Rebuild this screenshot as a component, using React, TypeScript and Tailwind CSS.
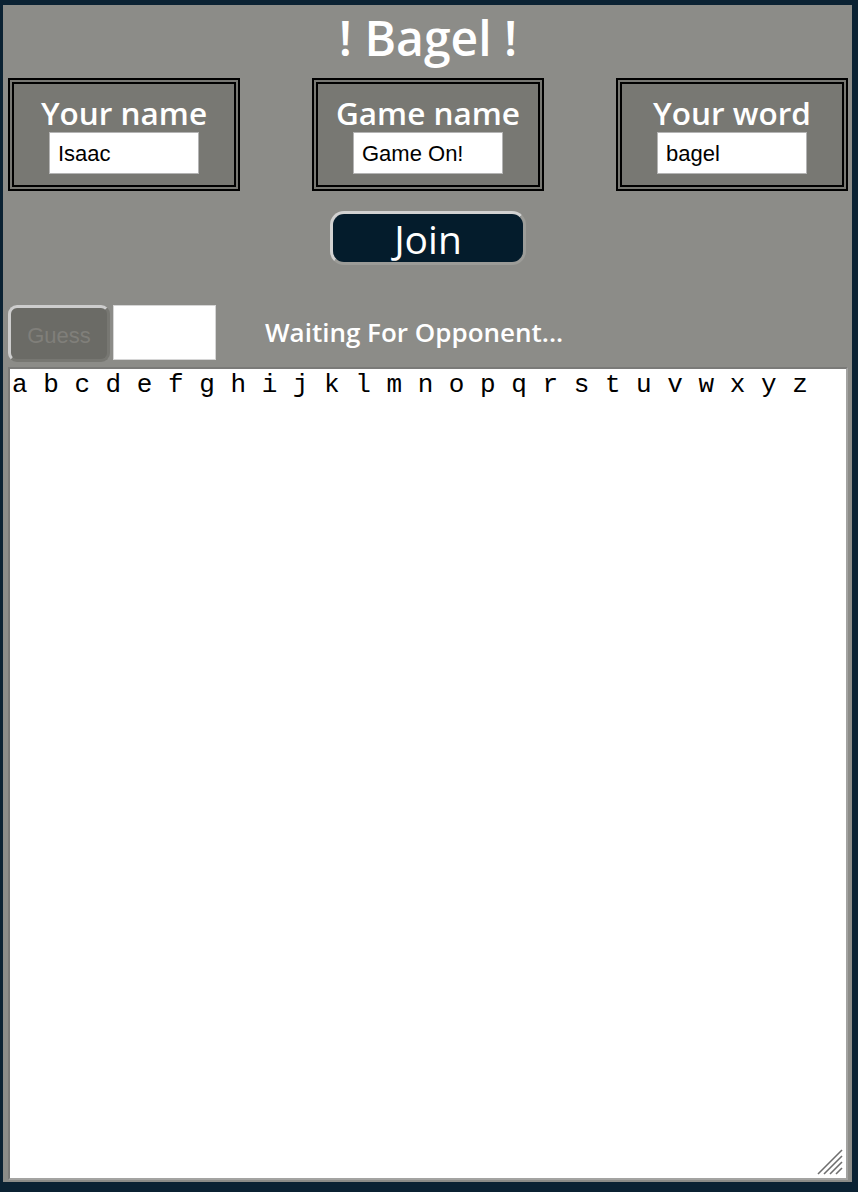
import React from "react";

const letters = "a b c d e f g h i j k l m n o p q r s t u v w x y z";

function Field({ label, value }: { label: string; value: string }) {
  return (
    <div className="flex h-[113px] w-[232px] flex-col items-center border-[6px] border-double border-black bg-[#787873] pt-[11px]">
      <span className="font-['Open_Sans',sans-serif] text-[31.5px] font-semibold leading-[36px] text-white">{label}</span>
      <input
        defaultValue={value}
        className="mt-[1px] h-[42px] w-[150px] border border-[#b4b4b4] bg-white px-[8px] pt-[2px] font-['Liberation_Sans',Arial,sans-serif] text-[22px] text-black outline-none"
      />
    </div>
  );
}

export default function App() {
  return (
    <div className="h-[1192px] w-full overflow-hidden bg-[#0b2233] pt-[5px] pl-[3px] pr-[6px] pb-[10px]">
      <div className="flex h-full flex-col bg-[#8c8c88] pl-[5px] pr-[4px]">
        <h1 className="mt-[3px] text-center font-['Open_Sans',sans-serif] text-[48px] font-semibold leading-[60px] text-white">! Bagel !</h1>

        <div className="mt-[10px] flex justify-between">
          <Field label="Your name" value="Isaac" />
          <Field label="Game name" value="Game On!" />
          <Field label="Your word" value="bagel" />
        </div>

        <div className="mt-[20px] flex justify-center">
          <button className="h-[54px] w-[196px] rounded-[14px] border-[3px] border-t-[#d2d2d2] border-l-[#d2d2d2] border-b-[#9c9c98] border-r-[#9c9c98] bg-[#041c2c] font-['Open_Sans',sans-serif] text-[39px] leading-none text-white">
            Join
          </button>
        </div>

        <div className="mt-[40px] flex items-start">
          <button
            disabled
            className="h-[57px] w-[102px] rounded-[9px] border-[3px] border-t-[#cdcdcd] border-l-[#cdcdcd] border-b-[#777772] border-r-[#777772] bg-[#6b6b66] pt-[4px] font-['Liberation_Sans',Arial,sans-serif] text-[22px] text-[#807f7a]"
          >
            Guess
          </button>
          <input className="ml-[3px] h-[55px] w-[103px] border border-[#d6d6d6] bg-white outline-none" />
          <span className="ml-[49px] mt-[10px] font-['Open_Sans',sans-serif] text-[26px] font-semibold leading-[34px] text-white">
            Waiting For Opponent...
          </span>
        </div>

        <div className="relative mt-[5px] h-[813px] w-[840px]">
          <textarea
            readOnly
            value={letters}
            className="h-full w-full resize-none border-2 border-t-[#7a7a78] border-l-[#7a7a78] border-b-[#a3a3a1] border-r-[#a3a3a1] bg-white px-[2px] pt-[1px] font-['Liberation_Mono','Courier_New',monospace] text-[26px] leading-[30px] text-black outline-none"
          />
          <svg className="absolute right-[5px] bottom-[5px]" width="26" height="26" viewBox="0 0 26 26">
            <g stroke="#6e6e6e" strokeWidth="1.6">
              <line x1="1" y1="25" x2="25" y2="1" />
              <line x1="7" y1="25" x2="25" y2="7" />
              <line x1="13" y1="25" x2="25" y2="13" />
              <line x1="19" y1="25" x2="25" y2="19" />
            </g>
          </svg>
        </div>
      </div>
    </div>
  );
}
